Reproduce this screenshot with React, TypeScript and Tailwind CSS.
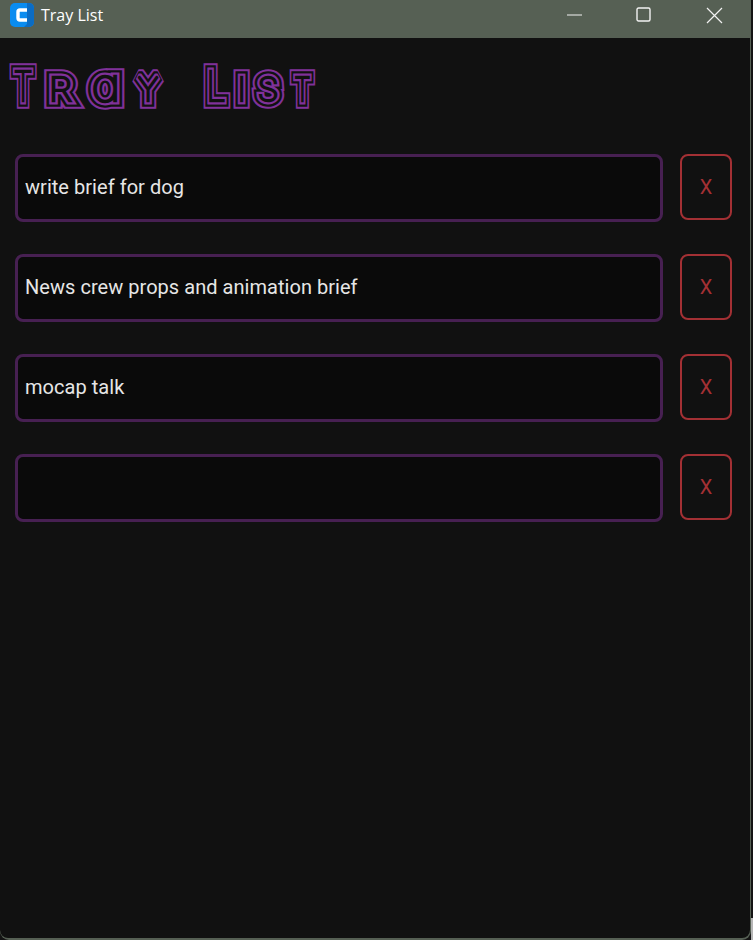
const rows = ["write brief for dog", "News crew props and animation brief", "mocap talk", ""];

const purple = "#80319a";
const dark = "#111111";

const layers = [
  { stroke: purple, width: 15.5 },
  { stroke: dark, width: 11.5 },
  { stroke: purple, width: 6.8 },
  { stroke: dark, width: 2.4 },
];

const letters = [
  { c: "T", cx: 23, y: 63, size: 41, sx: 0.76 },
  { c: "R", cx: 60.5, y: 63, size: 33, sx: 1.15 },
  { c: "a", cx: 106, y: 63, size: 45, sx: 1.12 },
  { c: "Y", cx: 148, y: 63, size: 33, sx: 1 },
  { c: "L", cx: 216, y: 63, size: 41, sx: 0.85 },
  { c: "I", cx: 241.5, y: 63, size: 33, sx: 1 },
  { c: "S", cx: 268, y: 63, size: 33, sx: 1.05 },
  { c: "T", cx: 302.5, y: 63, size: 33, sx: 0.8 },
];

function Title() {
  return (
    <svg width="330" height="80" viewBox="0 0 330 80" className="block" role="img" aria-label="Tray List">
      <defs>
        <g id="title-text" fontFamily="Inter, sans-serif" fontWeight="100" textAnchor="middle" style={{ fontFeatureSettings: '"cv11"' }}>
          {letters.map((l, i) => (
            <text key={i} fontSize={l.size} transform={`translate(${l.cx} ${l.y}) scale(${l.sx} 1)`}>
              {l.c}
            </text>
          ))}
        </g>
      </defs>
      {layers.map((l, i) => (
        <use key={i} href="#title-text" fill={dark} stroke={l.stroke} strokeWidth={l.width} strokeLinejoin="miter" strokeMiterlimit={2} />
      ))}
    </svg>
  );
}

export default function App() {
  return (
    <div className="relative h-[940px] w-[753px] overflow-hidden bg-[#141414] font-['Roboto',sans-serif]">
      <div className="h-[940px] w-[751px] overflow-hidden rounded-b-[9px] bg-[#566054] pr-[1px]">
        <div className="flex h-[38px] items-center pb-[8px]">
          <svg width="24" height="24" viewBox="0 0 24 24" className="ml-[10px]">
            <rect x="0" y="0" width="24" height="24" rx="5" fill="#0a8cf0" />
            <path d="M17 0h2a5 5 0 0 1 5 5v14a5 5 0 0 1-5 5h-5l3-3z" fill="#0b6cc4" />
            <path d="M17 7H10a2 2 0 0 0-2 2v6a2 2 0 0 0 2 2h7" fill="none" stroke="#ffffff" strokeWidth="3.4" />
          </svg>
          <span className="ml-[7px] font-['Open_Sans',sans-serif] text-[16px] text-white">Tray List</span>
          <div className="ml-auto mr-[27px] flex items-center">
            <svg width="16" height="16" viewBox="0 0 16 16" className="mr-[53px]">
              <path d="M0 8h15" stroke="#f2f2f2" strokeWidth="1" />
            </svg>
            <svg width="16" height="16" viewBox="0 0 16 16" className="mr-[54px]">
              <rect x="1" y="1" width="13" height="13" rx="1.5" fill="none" stroke="#f2f2f2" strokeWidth="1.4" />
            </svg>
            <svg width="17" height="17" viewBox="0 0 17 17">
              <path d="M1 1l15 15M16 1L1 16" stroke="#f2f2f2" strokeWidth="1.2" />
            </svg>
          </div>
        </div>
        <div className="h-[900px] rounded-b-[8px] bg-[#111111]">
          <Title />
          <div className="mt-[36px] flex flex-col gap-[32px] pl-[15px]">
            {rows.map((t, i) => (
              <div key={i} className="flex items-start gap-[17px]">
                <input
                  readOnly
                  value={t}
                  className="h-[68px] w-[648px] rounded-[8px] border-[3px] border-[#472052] bg-[#0a0a0a] px-[7px] pb-[2px] text-[20px] tracking-[0.04px] text-[#e6e6e6] outline-none"
                />
                <button className="flex h-[66px] w-[52px] items-center justify-center rounded-[8px] border-2 border-[#a33034] text-[20px] text-[#a33034]">
                  X
                </button>
              </div>
            ))}
          </div>
        </div>
      </div>
      <div className="absolute bottom-0 right-0 h-[22px] w-[2px] bg-[#b5b5b5]" />
    </div>
  );
}
